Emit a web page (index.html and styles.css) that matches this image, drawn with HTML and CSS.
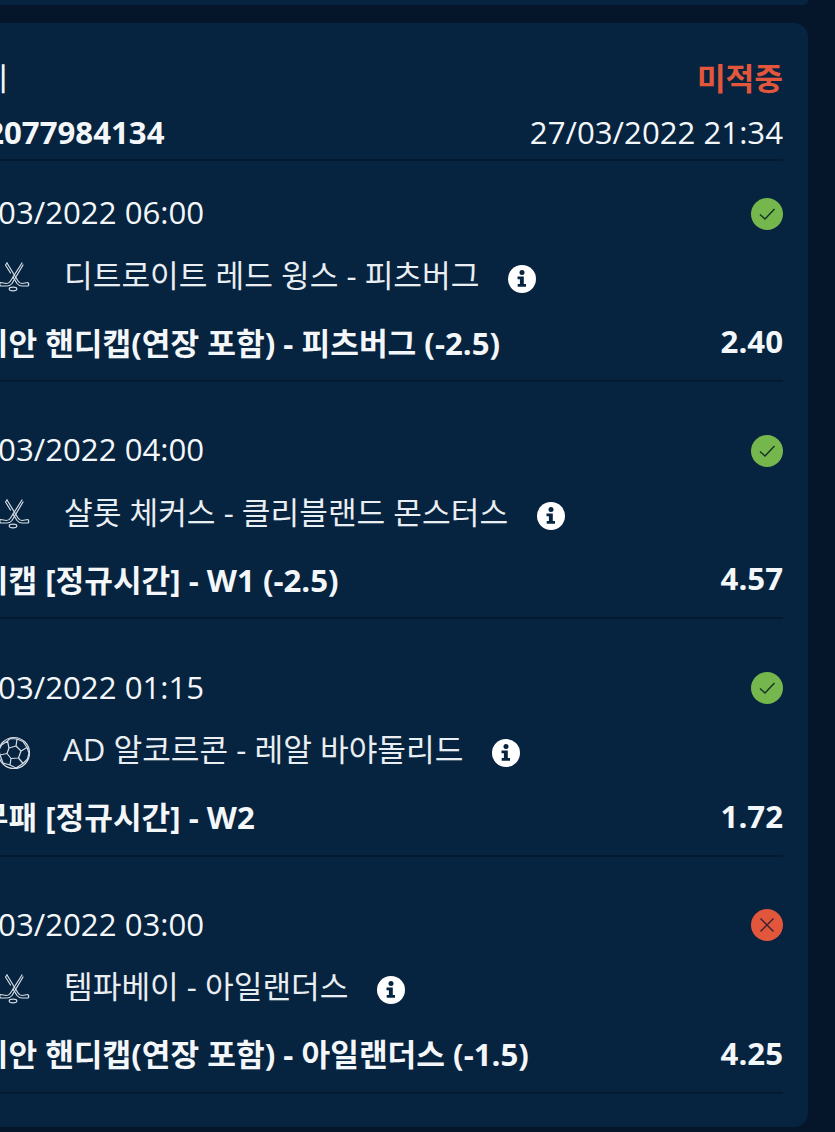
FILE: index.html
```html
<!DOCTYPE html>
<html lang="ko">
<head>
<meta charset="utf-8">
<title>베팅 내역</title>
<link rel="stylesheet" href="styles.css">
</head>
<body>
<svg class="defs" width="0" height="0" aria-hidden="true">
  <defs>
    <symbol id="hockey" viewBox="0 0 34 34">
      <g fill="none" stroke="#d5dde4" stroke-width="1.2" stroke-linecap="round" stroke-linejoin="round">
        <path d="M25 3 L13.500 21 Q12 23.500 9.500 23.500 L3.500 22.500 Q2 24.500 3.500 26 L10 26 Q13 26 15 23.500 L26 5"/>
        <path d="M10 3 L21 21 Q22.500 23.500 25 23.500 L31 22.500 Q32.500 24.500 31 26 L25 26 Q22 26 20 23.500 L16 17"/>
        <path d="M10 3 L8.500 5 L13.500 13"/>
        <ellipse cx="16" cy="29" rx="3.800" ry="1.800"/>
      </g>
    </symbol>
    <symbol id="ball" viewBox="0 0 34 34">
      <g fill="none" stroke="#d5dde4" stroke-width="1.2" stroke-linejoin="round">
        <circle cx="17" cy="17" r="15.500"/>
        <path d="M12 12 L19 10 L24 15 L21.500 22 L14 22.500 L10 17.500 Z"/>
        <path d="M12 12 L10.500 5 M19 10 L20 3 L13 2.500 L10.500 5 L4.500 9 M24 15 L30 11.500 L26 5.500 L20 3 M21.500 22 L26 27.500 L30.500 23 L32 17 L30 11.500 M14 22.500 L13 29 L19 32 L26 27.500 M10 17.500 L3 19 L6 27 L13 29 M3 19 L2 14 L4.500 9"/>
      </g>
    </symbol>
    <symbol id="info" viewBox="0 0 28 28">
      <circle cx="14" cy="14" r="14" fill="#fff"/>
      <circle cx="14" cy="7.600" r="2.500" fill="#06233f"/>
      <path d="M9.500 11.500 H15.800 V19 H18 V21.800 H9.700 V19 H11.900 V14.300 H9.500 Z" fill="#06233f"/>
    </symbol>
    <symbol id="won" viewBox="0 0 32 32">
      <circle cx="16" cy="16" r="16" fill="#75b74c"/>
      <path d="M9 16.500 L14 21 L23.500 11" fill="none" stroke="#123326" stroke-width="1.400"/>
    </symbol>
    <symbol id="lost" viewBox="0 0 32 32">
      <circle cx="16" cy="16" r="16" fill="#e2573c"/>
      <path d="M9.500 9.500 L22.500 22.500 M22.500 9.500 L9.500 22.500" fill="none" stroke="#3a2230" stroke-width="1.400"/>
    </symbol>
  </defs>
</svg>

<div class="prev-card"></div>

<main class="card">
  <header class="summary">
    <div class="line">
      <span class="type">멀티</span>
      <span class="status">미적중</span>
    </div>
    <div class="line line-id">
      <strong class="coupon">#: 2077984134</strong>
      <span class="placed">27/03/2022 21:34</span>
    </div>
  </header>

  <section class="bet">
    <div class="line">
      <span class="date">27/03/2022 06:00</span>
      <svg class="result"><use href="#won"/></svg>
    </div>
    <div class="teams">
      <svg class="sport"><use href="#hockey"/></svg>
      <span class="names">디트로이트 레드 윙스 - 피츠버그</span>
      <svg class="info"><use href="#info"/></svg>
    </div>
    <div class="line pick">
      <strong class="market">아시안 핸디캡(연장 포함) - 피츠버그 (-2.5)</strong>
      <strong class="odds">2.40</strong>
    </div>
  </section>

  <section class="bet">
    <div class="line">
      <span class="date">27/03/2022 04:00</span>
      <svg class="result"><use href="#won"/></svg>
    </div>
    <div class="teams">
      <svg class="sport"><use href="#hockey"/></svg>
      <span class="names">샬롯 체커스 - 클리블랜드 몬스터스</span>
      <svg class="info"><use href="#info"/></svg>
    </div>
    <div class="line pick">
      <strong class="market">핸디캡 [정규시간] - W1 (-2.5)</strong>
      <strong class="odds">4.57</strong>
    </div>
  </section>

  <section class="bet">
    <div class="line">
      <span class="date">27/03/2022 01:15</span>
      <svg class="result"><use href="#won"/></svg>
    </div>
    <div class="teams teams-ball">
      <svg class="sport"><use href="#ball"/></svg>
      <span class="names">AD 알코르콘 - 레알 바야돌리드</span>
      <svg class="info"><use href="#info"/></svg>
    </div>
    <div class="line pick">
      <strong class="market">승무패 [정규시간] - W2</strong>
      <strong class="odds">1.72</strong>
    </div>
  </section>

  <section class="bet">
    <div class="line">
      <span class="date">27/03/2022 03:00</span>
      <svg class="result"><use href="#lost"/></svg>
    </div>
    <div class="teams">
      <svg class="sport"><use href="#hockey"/></svg>
      <span class="names">템파베이 - 아일랜더스</span>
      <svg class="info"><use href="#info"/></svg>
    </div>
    <div class="line pick">
      <strong class="market">아시안 핸디캡(연장 포함) - 아일랜더스 (-1.5)</strong>
      <strong class="odds">4.25</strong>
    </div>
  </section>
</main>
</body>
</html>
```

FILE: styles.css
```css
html, body {
  margin: 0;
  padding: 0;
  height: 1132px;
  overflow: hidden;
  background: #05162a;
}

body {
  font-family: "Open Sans", "Noto Sans CJK KR", sans-serif;
  font-size: 31.2px;
  color: #f4f7f9;
}

.defs {
  display: block;
  height: 0;
}

.prev-card {
  height: 5px;
  margin: 0 27px 0 -74px;
  background: #06233f;
  border-radius: 0 0 14px 14px;
}

.card {
  box-sizing: border-box;
  width: 882px;
  height: 1104px;
  margin: 18px 0 0 -74px;
  padding: 33px 25px 0;
  background: #06233f;
  border-radius: 14px;
}

.summary {
  padding-bottom: 7px;
  border-bottom: 2px solid #041a30;
}

.line {
  display: flex;
  justify-content: space-between;
  align-items: center;
  height: 40px;
  white-space: nowrap;
}

.line-id {
  margin-top: 16px;
}

.status {
  font-weight: 700;
  color: #e2573c;
}

.coupon,
.market,
.odds {
  font-weight: 700;
}

.coupon {
  margin-left: -2px;
}

.bet {
  padding: 47.33px 0 19px;
  border-bottom: 2px solid #041a30;
}

.bet:first-of-type {
  padding-top: 31px;
}

.result {
  width: 32px;
  height: 32px;
  flex: none;
  margin-top: 3px;
}

.teams {
  display: flex;
  align-items: center;
  height: 40px;
  margin-top: 21px;
  padding-left: 46px;
  white-space: nowrap;
}

.sport {
  width: 34px;
  height: 34px;
  flex: none;
  margin-right: 33px;
  margin-top: 8px;
}

.teams-ball .sport {
  margin-right: 32px;
  margin-top: 10px;
}

.names {
  color: #e9eef2;
}

.info {
  width: 28px;
  height: 28px;
  flex: none;
  margin: 11px 0 0 29px;
}

.pick {
  margin-top: 28px;
}
```
